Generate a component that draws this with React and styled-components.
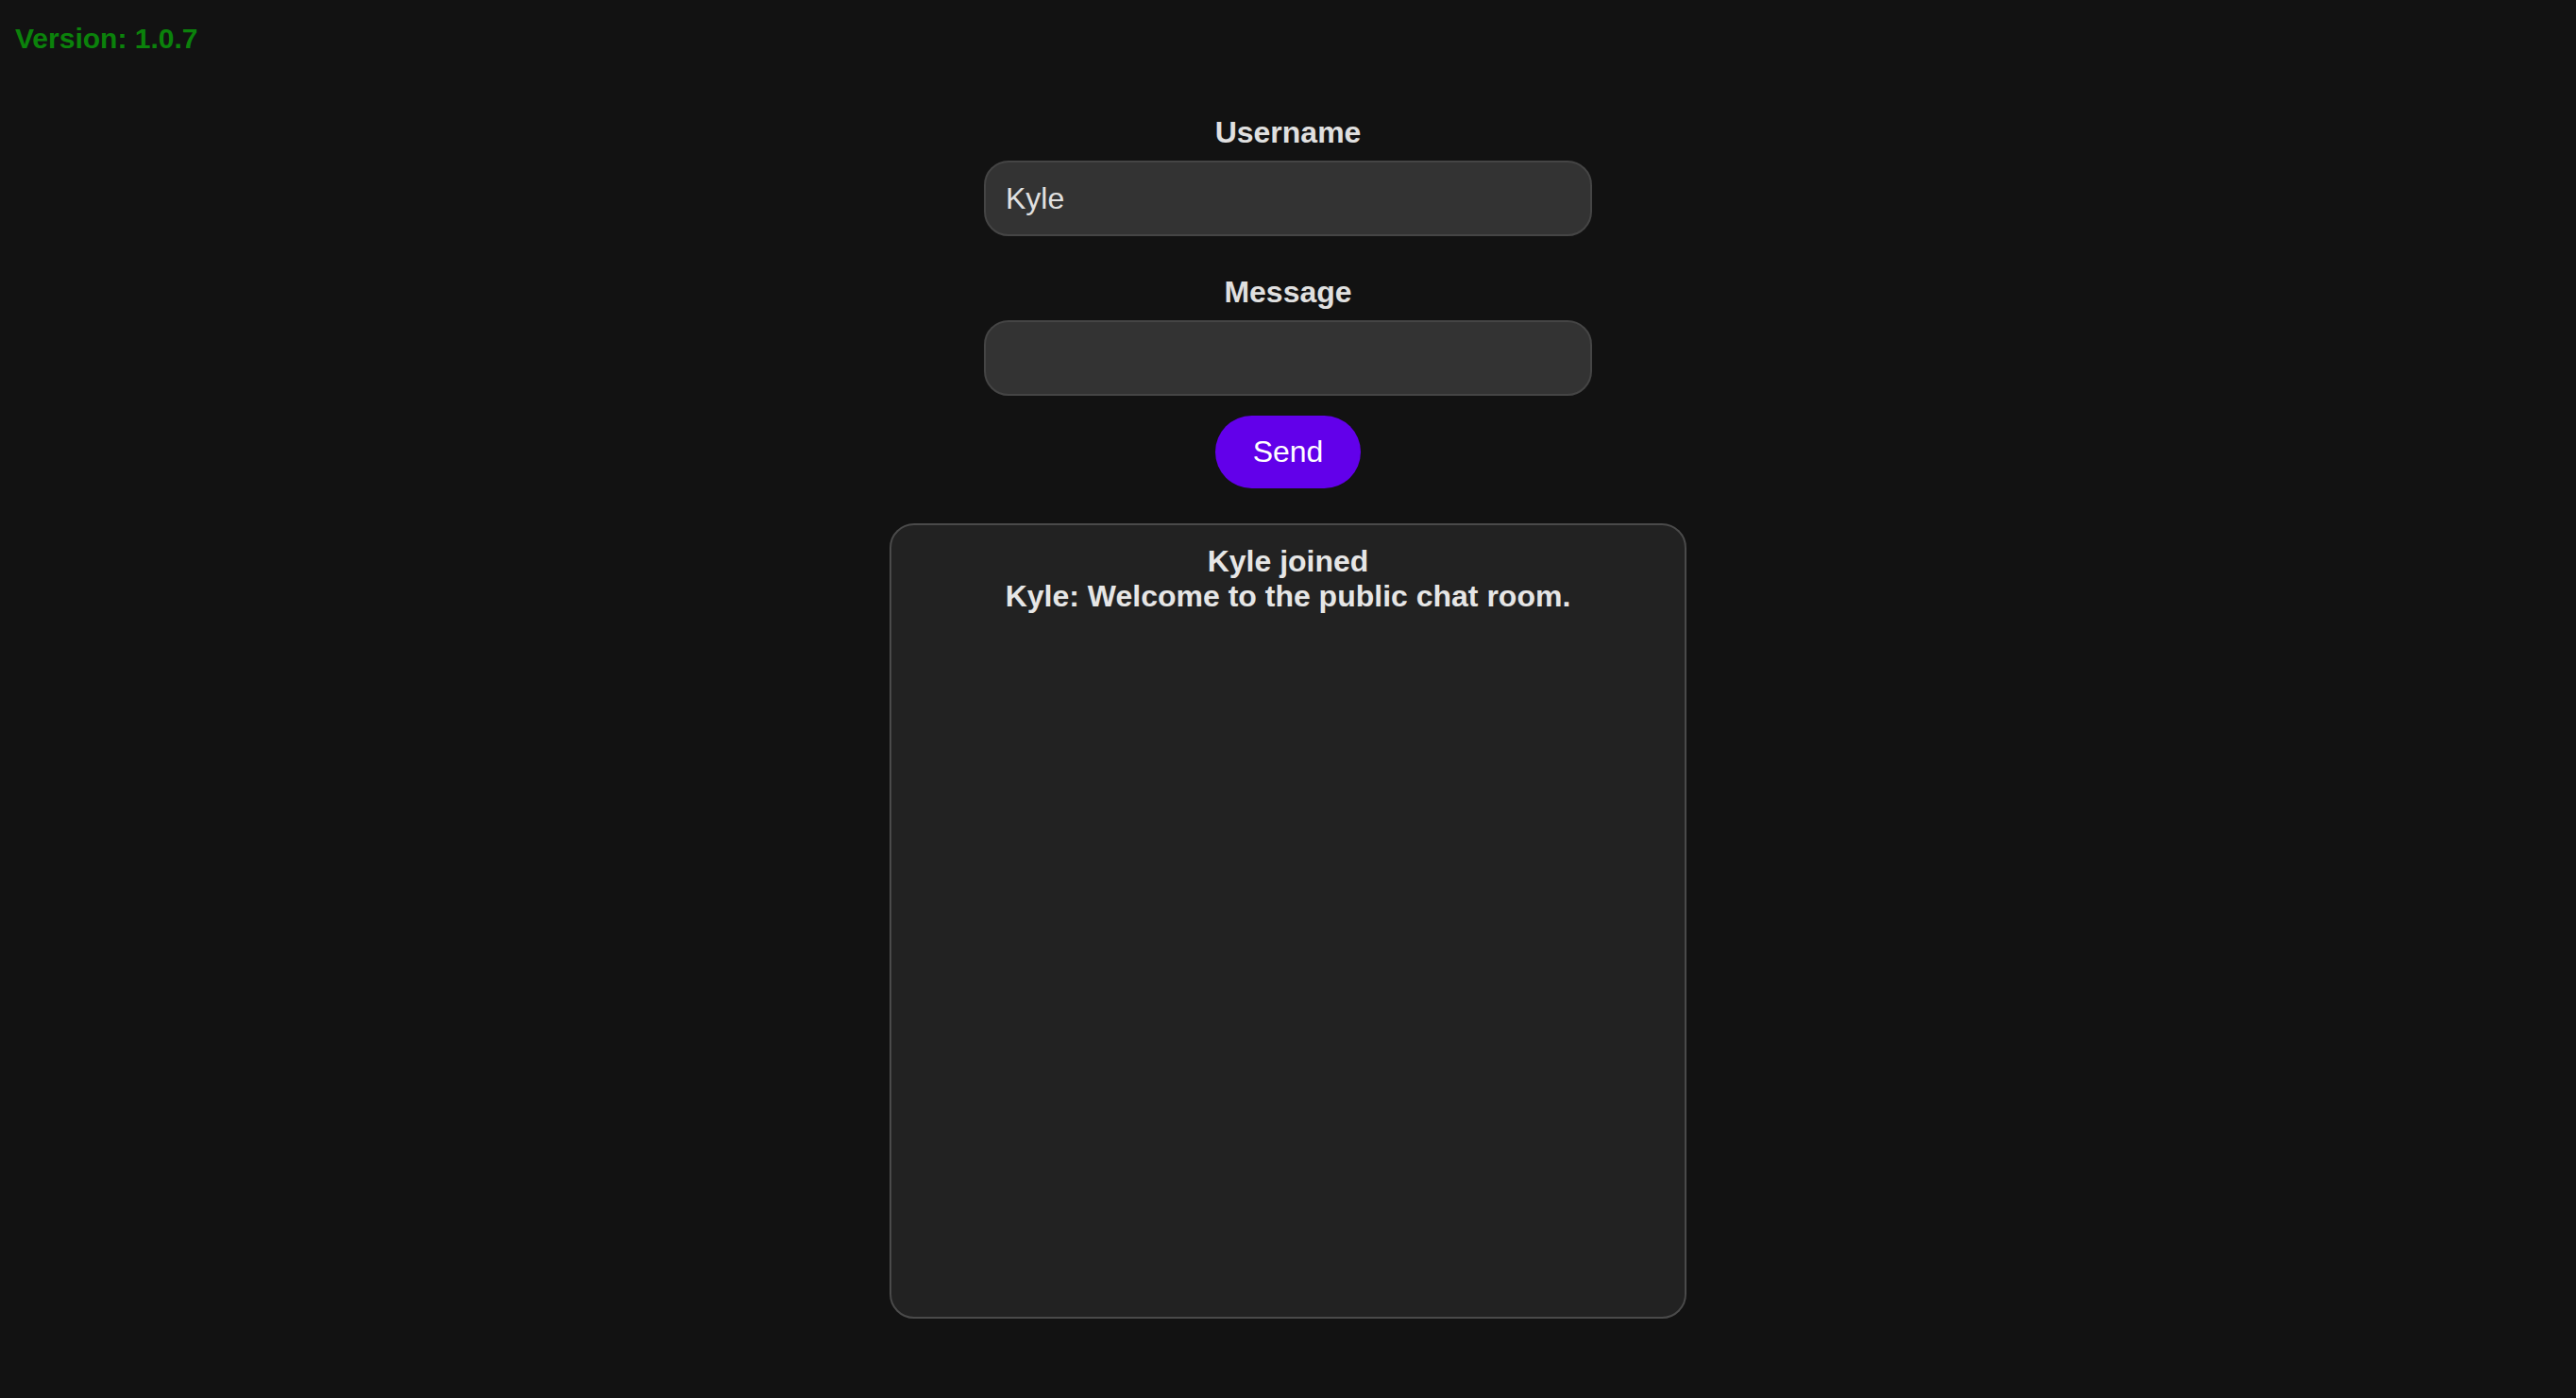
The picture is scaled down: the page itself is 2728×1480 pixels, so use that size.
import React from "react";
import styled, { createGlobalStyle } from "styled-components";

const Global = createGlobalStyle`
  html, body {
    margin: 0;
    padding: 0;
    background: #121212;
  }
  body {
    font-family: "Liberation Sans", Arial, sans-serif;
    color: #e0e0e0;
  }
  * { box-sizing: border-box; }
`;

const Page = styled.div`
  min-height: 100vh;
  background: #121212;
  display: flex;
  flex-direction: column;
`;

const Version = styled.div`
  padding: 24px 0 0 16px;
  font-size: 30px;
  font-weight: bold;
  color: #0b820b;
`;

const Main = styled.div`
  display: flex;
  flex-direction: column;
  align-items: center;
  margin-top: 64px;
`;

const Field = styled.div`
  display: flex;
  flex-direction: column;
  align-items: center;
  margin-bottom: ${(p) => p.$gap}px;
`;

const Label = styled.label`
  font-size: 32px;
  font-weight: bold;
  color: #e0e0e0;
  margin-bottom: 11px;
`;

const Input = styled.input`
  width: 644px;
  height: 80px;
  padding: 0 21px;
  font-family: "Liberation Sans", Arial, sans-serif;
  font-size: 32px;
  color: #e0e0e0;
  background: #333333;
  border: 2px solid #454545;
  border-radius: 26px;
  outline: none;
`;

const SendButton = styled.button`
  height: 77px;
  padding: 0 40px;
  font-family: "Liberation Sans", Arial, sans-serif;
  font-size: 32px;
  color: #ffffff;
  background: #6200ea;
  border: none;
  border-radius: 40px;
  cursor: pointer;
`;

const ChatBox = styled.div`
  margin-top: 37px;
  width: 844px;
  height: 842px;
  background: #222222;
  border: 2px solid #4a4a4a;
  border-radius: 26px;
  padding: 20px;
  display: flex;
  flex-direction: column;
  align-items: center;
  text-align: center;
`;

const Line = styled.div`
  font-size: 32px;
  font-weight: bold;
  color: #e6e6e6;
`;

export default function App() {
  return (
    <>
      <Global />
      <Page>
        <Version>Version: 1.0.7</Version>
        <Main>
          <Field $gap={41}>
            <Label>Username</Label>
            <Input defaultValue="Kyle" />
          </Field>
          <Field $gap={21}>
            <Label>Message</Label>
            <Input defaultValue="" />
          </Field>
          <SendButton>Send</SendButton>
          <ChatBox>
            <Line>Kyle joined</Line>
            <Line>Kyle: Welcome to the public chat room.</Line>
          </ChatBox>
        </Main>
      </Page>
    </>
  );
}
